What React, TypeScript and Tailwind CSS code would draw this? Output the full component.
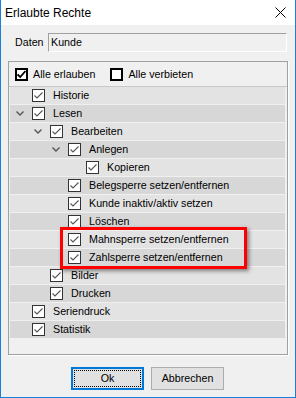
import React from 'react';

type Node = { label: string; level: number; open?: boolean };

const nodes: Node[] = [
    { label: 'Historie', level: 0 },
    { label: 'Lesen', level: 0, open: true },
    { label: 'Bearbeiten', level: 1, open: true },
    { label: 'Anlegen', level: 2, open: true },
    { label: 'Kopieren', level: 3 },
    { label: 'Belegsperre setzen/entfernen', level: 2 },
    { label: 'Kunde inaktiv/aktiv setzen', level: 2 },
    { label: 'Löschen', level: 2 },
    { label: 'Mahnsperre setzen/entfernen', level: 2 },
    { label: 'Zahlsperre setzen/entfernen', level: 2 },
    { label: 'Bilder', level: 1 },
    { label: 'Drucken', level: 1 },
    { label: 'Seriendruck', level: 0 },
    { label: 'Statistik', level: 0 },
];

// indent per tree level (18px steps)
const indent = ['w-[6px]', 'w-[24px]', 'w-[42px]', 'w-[60px]'];

function TreeCheck() {
    return (
        <div className="w-[13px] h-[13px] shrink-0 border border-[#333] bg-white flex items-center justify-center">
            <svg width="11" height="11" viewBox="0 0 11 11">
                <path d="M1.5 5.5 L4 8 L9.5 2.5" fill="none" stroke="#555" strokeWidth="1.1" />
            </svg>
        </div>
    );
}

function HeadCheck({ checked }: { checked: boolean }) {
    return (
        <div className="w-[13px] h-[13px] shrink-0 border-2 border-black bg-white flex items-center justify-center">
            {checked && (
                <svg width="9" height="9" viewBox="0 0 9 9">
                    <path d="M0.5 4.5 L3.2 7 L8.5 1" fill="none" stroke="#000" strokeWidth="1.8" />
                </svg>
            )}
        </div>
    );
}

function Chevron() {
    return (
        <svg width="8" height="5" viewBox="0 0 8 5">
            <path d="M0.5 0.5 L4 4 L7.5 0.5" fill="none" stroke="#555" strokeWidth="1.4" />
        </svg>
    );
}

export default function App() {
    return (
        <div
            className="relative w-[296px] h-[398px] flex flex-col bg-[#f0f0f0] border-x border-b border-[#1a7fd6] text-[10.7px] text-black"
            style={{ fontFamily: '"Liberation Sans", Arial, sans-serif' }}
        >
            {/* title bar */}
            <div className="h-[25px] shrink-0 bg-white flex items-center justify-between pl-[4px] pr-[9px]">
                <span className="text-[12px] leading-none">Erlaubte Rechte</span>
                <svg width="11" height="11" viewBox="0 0 11 11">
                    <path d="M0.5 0.5 L10.5 10.5 M10.5 0.5 L0.5 10.5" stroke="#000" strokeWidth="1" />
                </svg>
            </div>

            <div className="flex flex-col px-[7px]">
                {/* Daten */}
                <div className="mt-[8px] flex items-center h-[19px]">
                    <span className="ml-[7px] w-[33px]">Daten</span>
                    <div className="flex-1 h-[19px] mr-[1px] flex items-center pl-[2px] bg-[#f0f0f0] border border-t-[#a0a0a0] border-l-[#a0a0a0] border-r-white border-b-white">
                        Kunde
                    </div>
                </div>

                {/* rights panel */}
                <div className="mt-[9px] h-[294px] flex flex-col border border-[#a0a0a0] shadow-[1px_1px_0_#fff]">
                    <div className="h-[25px] shrink-0 flex items-center pl-[6px] border-b border-[#c8c8c8]">
                        <HeadCheck checked />
                        <span className="ml-[5px]">Alle erlauben</span>
                        <div className="ml-[15px]">
                            <HeadCheck checked={false} />
                        </div>
                        <span className="ml-[5px]">Alle verbieten</span>
                    </div>
                    <div className="flex-1 flex flex-col pl-[1px] pr-[2px]">
                        {nodes.map((n, i) => (
                            <div
                                key={n.label}
                                className={
                                    'h-[18px] shrink-0 flex items-center border-b border-[#f0f0f0] ' +
                                    (i % 2 === 0 ? 'bg-[#e3e3e3]' : 'bg-[#d7d7d7]')
                                }
                            >
                                <div className={indent[n.level] + ' shrink-0'} />
                                <div className="w-[16px] shrink-0 flex items-center">{n.open && <Chevron />}</div>
                                <TreeCheck />
                                <span className="ml-[8px] whitespace-nowrap">{n.label}</span>
                            </div>
                        ))}
                    </div>
                </div>

                {/* buttons */}
                <div className="mt-[12px] flex justify-center gap-[7px] pr-[1px]">
                    <button className="w-[73px] h-[23px] bg-[#e1e1e1] border-2 border-[#0078d7] p-[1px]">
                        <div className="w-full h-full border border-dotted border-black flex items-center justify-center">
                            Ok
                        </div>
                    </button>
                    <button className="w-[73px] h-[23px] bg-[#e1e1e1] border border-[#adadad] flex items-center justify-center">
                        Abbrechen
                    </button>
                </div>
            </div>

            {/* red highlight around two rows */}
            <div className="absolute left-[59px] top-[227px] w-[187px] h-[42px] border-[3px] border-[#f00] shadow-[2px_2px_4px_rgba(0,0,0,0.45)] pointer-events-none" />
        </div>
    );
}
